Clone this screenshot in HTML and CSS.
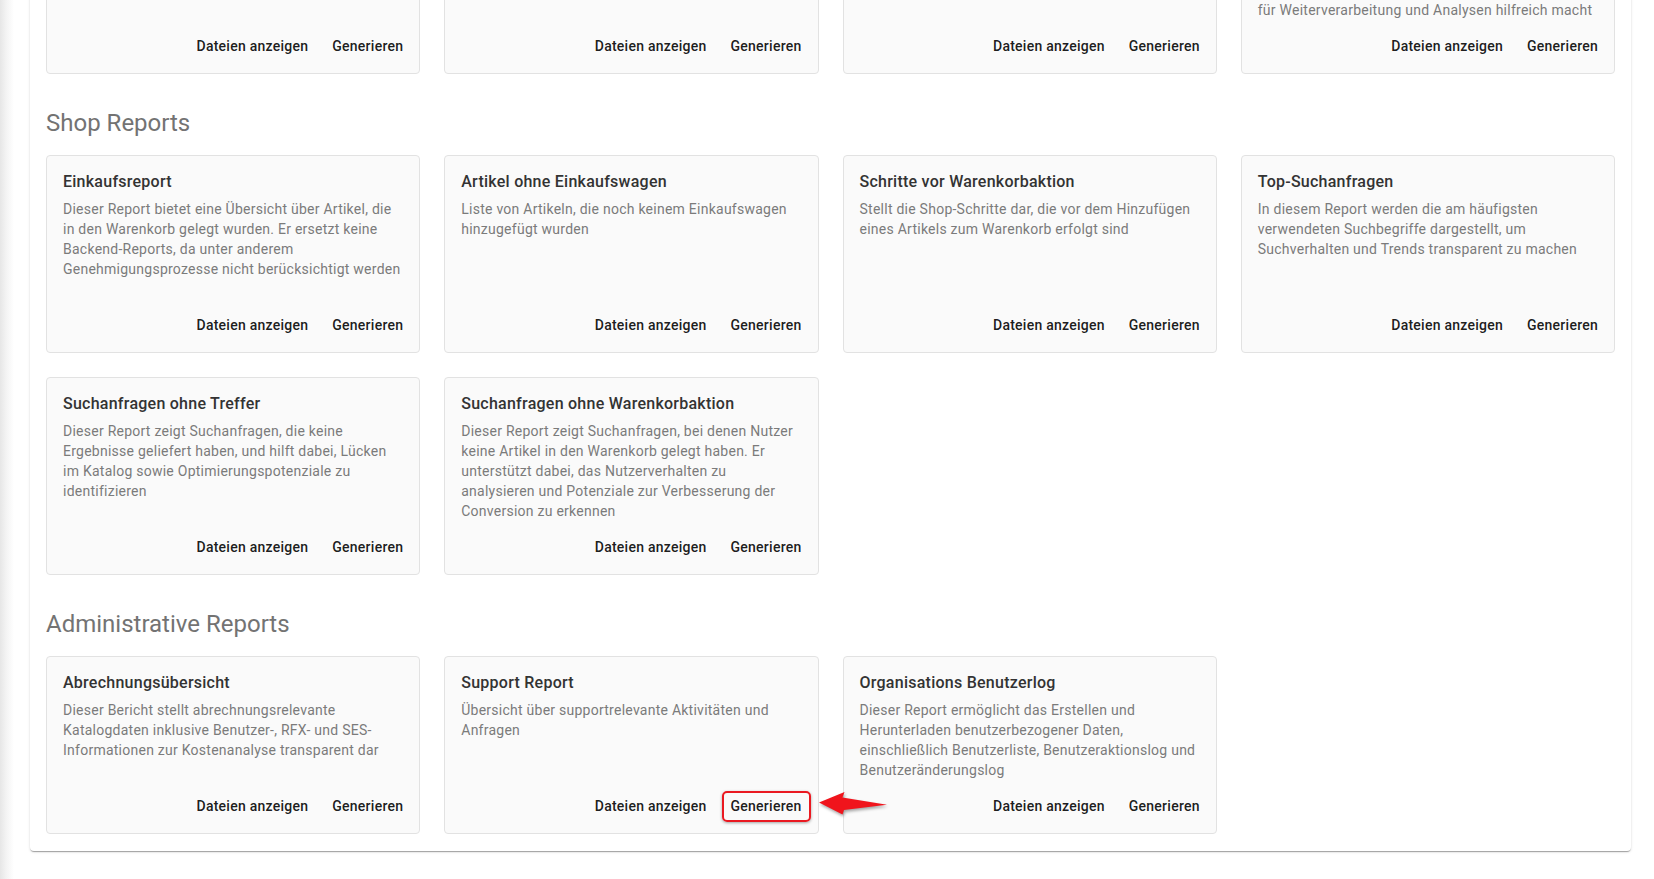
FILE: index.html
```html
<!DOCTYPE html>
<html lang="de">
<head>
<meta charset="utf-8">
<title>Reports</title>
<link rel="stylesheet" href="styles.css">
</head>
<body>
<div class="page">
  <main class="panel">
    <section class="report-section">
      <div class="report-grid">
        <div class="card">
          <div class="card-actions"><button class="btn">Dateien anzeigen</button><button class="btn">Generieren</button></div>
        </div>
        <div class="card">
          <div class="card-actions"><button class="btn">Dateien anzeigen</button><button class="btn">Generieren</button></div>
        </div>
        <div class="card">
          <div class="card-actions"><button class="btn">Dateien anzeigen</button><button class="btn">Generieren</button></div>
        </div>
        <div class="card">
          <p class="card-desc">für Weiterverarbeitung und Analysen hilfreich macht</p>
          <div class="card-actions"><button class="btn">Dateien anzeigen</button><button class="btn">Generieren</button></div>
        </div>
      </div>
    </section>

    <section class="report-section">
      <h2 class="section-title">Shop Reports</h2>
      <div class="report-grid">
        <div class="card">
          <h3 class="card-title">Einkaufsreport</h3>
          <p class="card-desc">Dieser Report bietet eine Übersicht über Artikel, die in den Warenkorb gelegt wurden. Er ersetzt keine Backend-Reports, da unter anderem Genehmigungsprozesse nicht berücksichtigt werden</p>
          <div class="card-actions"><button class="btn">Dateien anzeigen</button><button class="btn">Generieren</button></div>
        </div>
        <div class="card">
          <h3 class="card-title">Artikel ohne Einkaufswagen</h3>
          <p class="card-desc">Liste von Artikeln, die noch keinem Einkaufswagen hinzugefügt wurden</p>
          <div class="card-actions"><button class="btn">Dateien anzeigen</button><button class="btn">Generieren</button></div>
        </div>
        <div class="card">
          <h3 class="card-title">Schritte vor Warenkorbaktion</h3>
          <p class="card-desc">Stellt die Shop-Schritte dar, die vor dem Hinzufügen eines Artikels zum Warenkorb erfolgt sind</p>
          <div class="card-actions"><button class="btn">Dateien anzeigen</button><button class="btn">Generieren</button></div>
        </div>
        <div class="card">
          <h3 class="card-title">Top-Suchanfragen</h3>
          <p class="card-desc">In diesem Report werden die am häufigsten verwendeten Suchbegriffe dargestellt, um Suchverhalten und Trends transparent zu machen</p>
          <div class="card-actions"><button class="btn">Dateien anzeigen</button><button class="btn">Generieren</button></div>
        </div>
        <div class="card">
          <h3 class="card-title">Suchanfragen ohne Treffer</h3>
          <p class="card-desc">Dieser Report zeigt Suchanfragen, die keine Ergebnisse geliefert haben, und hilft dabei, Lücken im Katalog sowie Optimierungspotenziale zu identifizieren</p>
          <div class="card-actions"><button class="btn">Dateien anzeigen</button><button class="btn">Generieren</button></div>
        </div>
        <div class="card">
          <h3 class="card-title">Suchanfragen ohne Warenkorbaktion</h3>
          <p class="card-desc">Dieser Report zeigt Suchanfragen, bei denen Nutzer keine Artikel in den Warenkorb gelegt haben. Er unterstützt dabei, das Nutzerverhalten zu analysieren und Potenziale zur Verbesserung der Conversion zu erkennen</p>
          <div class="card-actions"><button class="btn">Dateien anzeigen</button><button class="btn">Generieren</button></div>
        </div>
      </div>
    </section>

    <section class="report-section">
      <h2 class="section-title">Administrative Reports</h2>
      <div class="report-grid">
        <div class="card">
          <h3 class="card-title">Abrechnungsübersicht</h3>
          <p class="card-desc">Dieser Bericht stellt abrechnungsrelevante Katalogdaten inklusive Benutzer-, RFX- und SES-Informationen zur Kostenanalyse transparent dar</p>
          <div class="card-actions"><button class="btn">Dateien anzeigen</button><button class="btn">Generieren</button></div>
        </div>
        <div class="card">
          <h3 class="card-title">Support Report</h3>
          <p class="card-desc">Übersicht über supportrelevante Aktivitäten und Anfragen</p>
          <div class="card-actions">
            <button class="btn">Dateien anzeigen</button>
            <button class="btn btn-highlight">Generieren
              <svg class="callout-arrow" width="74" height="30" viewBox="0 0 74 30" aria-hidden="true">
                <polygon points="3,13.5 28.5,3 26.5,8.5 71,15.8 28,21 26.5,25.5" fill="#f0141c"/>
              </svg>
            </button>
          </div>
        </div>
        <div class="card">
          <h3 class="card-title">Organisations Benutzerlog</h3>
          <p class="card-desc">Dieser Report ermöglicht das Erstellen und Herunterladen benutzerbezogener Daten, einschließlich Benutzerliste, Benutzeraktionslog und Benutzeränderungslog</p>
          <div class="card-actions"><button class="btn">Dateien anzeigen</button><button class="btn">Generieren</button></div>
        </div>
      </div>
    </section>
  </main>
</div>
</body>
</html>
```

FILE: styles.css
```css
html, body {
  margin: 0;
  padding: 0;
  height: 100%;
}

body {
  font-family: Roboto, "Liberation Sans", Arial, sans-serif;
  color: rgba(0, 0, 0, 0.87);
  background: #ffffff linear-gradient(to right, #e6e6e6 0, #f3f3f3 6px, #ffffff 14px) no-repeat;
  overflow: hidden;
}

.page {
  padding: 0 23px 0 30px;
}

.panel {
  margin-top: -31px;
  background: #ffffff;
  border-radius: 4px;
  padding: 16px 16px 17px;
  box-shadow: 0 2px 1px -1px rgba(0, 0, 0, 0.2), 0 1px 1px 0 rgba(0, 0, 0, 0.14), 0 1px 3px 0 rgba(0, 0, 0, 0.12);
}

.section-title {
  margin: 33px 0 16px;
  font-size: 24px;
  line-height: 32px;
  font-weight: 400;
  color: #737373;
}

.report-grid {
  display: grid;
  grid-template-columns: repeat(4, 1fr);
  grid-auto-rows: 1fr;
  gap: 24px;
}

.card {
  display: flex;
  flex-direction: column;
  background: #fafafa;
  border: 1px solid #e2e2e2;
  border-radius: 4px;
  padding: 14px 16px 0;
}

.card-title {
  margin: 0 0 5px;
  font-size: 16px;
  line-height: 24px;
  font-weight: 500;
  letter-spacing: 0.25px;
  color: #333333;
}

.card-desc {
  margin: 0 0 8px;
  font-size: 14px;
  line-height: 20px;
  letter-spacing: 0.25px;
  color: #7b7b7b;
}

.card-actions {
  margin: auto -8px 0;
  padding-bottom: 9px;
  display: flex;
  justify-content: flex-end;
  gap: 8px;
}

.btn {
  position: relative;
  height: 36px;
  padding: 0 8px;
  border: none;
  border-radius: 4px;
  background: transparent;
  font-family: Roboto, "Liberation Sans", Arial, sans-serif;
  font-size: 14px;
  font-weight: 500;
  color: rgba(0, 0, 0, 0.9);
  cursor: pointer;
  letter-spacing: 0.25px;
}

.btn-highlight::after {
  content: "";
  position: absolute;
  top: 3px;
  bottom: 2px;
  left: -1px;
  right: -1px;
  border: 2px solid #ea1921;
  border-radius: 5px;
  box-shadow: 0 1px 3px rgba(0, 0, 0, 0.35);
  pointer-events: none;
}

.callout-arrow {
  position: absolute;
  left: 93px;
  top: 1px;
  filter: drop-shadow(1px 2px 1.5px rgba(0, 0, 0, 0.35));
  pointer-events: none;
}
```
